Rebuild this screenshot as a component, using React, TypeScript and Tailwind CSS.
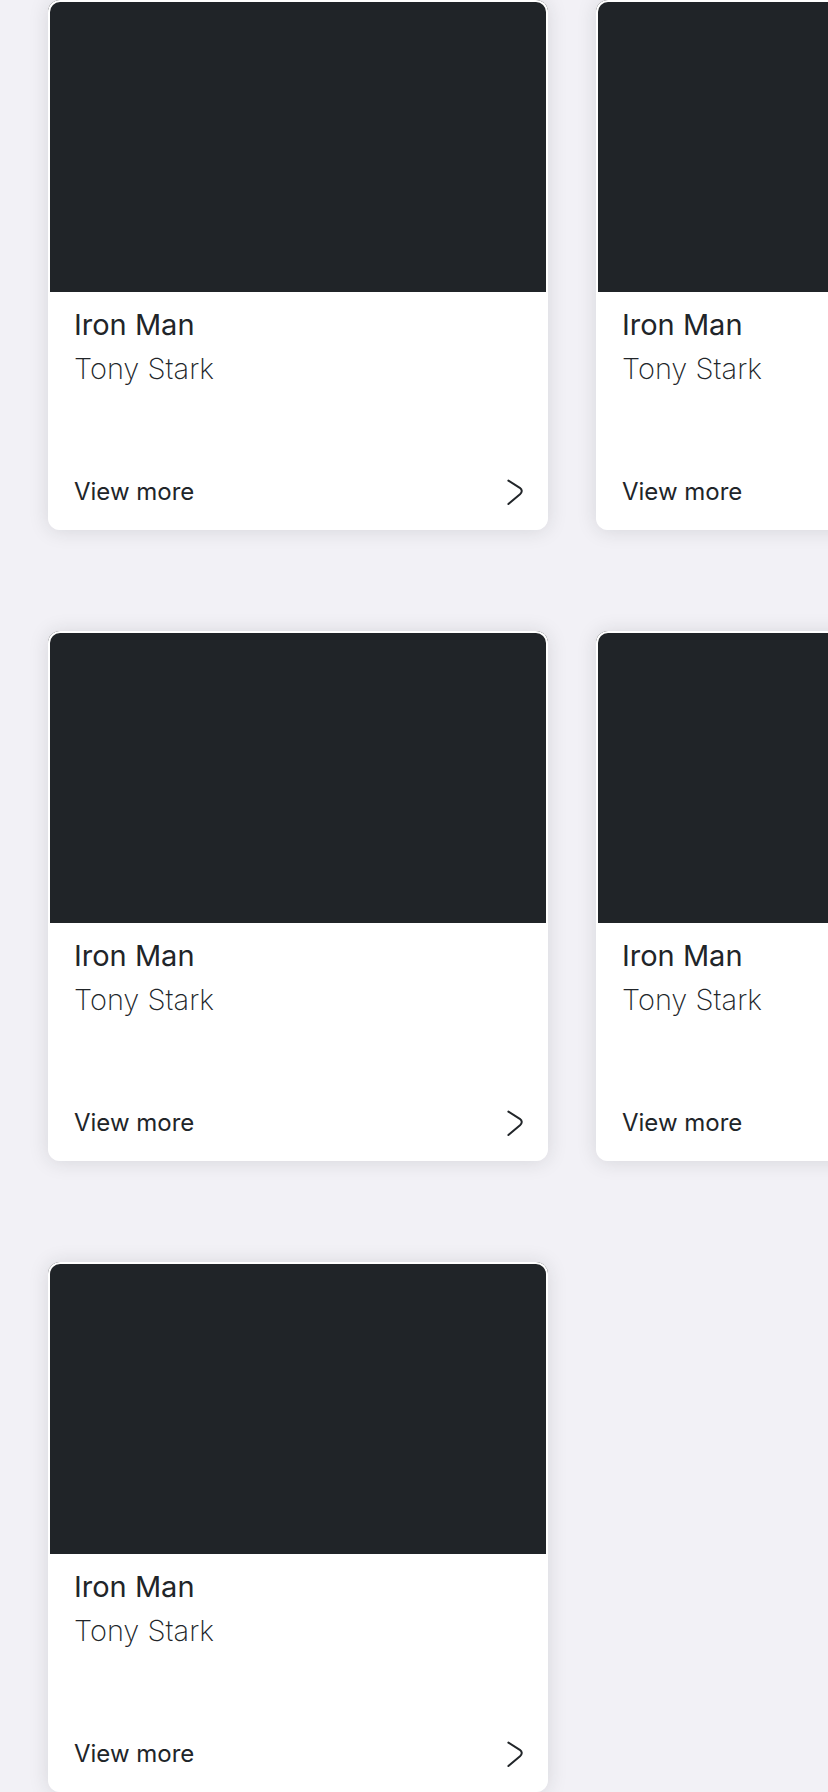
type Hero = { alias: string; name: string };

const ironMan: Hero = { alias: "Iron Man", name: "Tony Stark" };
const rows: Hero[][] = [[ironMan, ironMan], [ironMan, ironMan], [ironMan]];

function Chevron() {
  return (
    <svg
      className="h-7 w-5"
      viewBox="0 0 20 28"
      fill="none"
      stroke="currentColor"
      strokeWidth="2"
      strokeLinecap="round"
      strokeLinejoin="round"
      aria-hidden="true"
    >
      <path d="M4.4 2.6 L15.8 9.8 Q19.6 12.8 16 16.2 L4.4 26" />
    </svg>
  );
}

function HeroCard({ hero }: { hero: Hero }) {
  return (
    <article className="flex w-[500px] shrink-0 flex-col rounded-xl shadow-[0_1px_20px_rgba(33,37,41,0.13)]">
      <div className="h-[292px] rounded-t-xl bg-[#202428]">
        <div className="h-full rounded-t-xl border-2 border-b-0 border-white" />
      </div>
      <div className="rounded-b-xl bg-white pt-[11px]">
        <h2 className="px-[26px] text-[29px] leading-[44px] font-normal">{hero.alias}</h2>
        <p className="px-[26px] text-[29px] leading-[44px] font-extralight">{hero.name}</p>
        <a href="#" className="flex items-center justify-between px-6 pt-[83px] pb-5 text-2xl leading-9">
          <span className="pl-0.5">View more</span>
          <Chevron />
        </a>
      </div>
    </article>
  );
}

export default function App() {
  return (
    <main className="flex min-h-screen flex-col gap-[101px] overflow-hidden bg-[#f2f1f6] font-['Inter','Liberation_Sans',sans-serif] text-[#212529]">
      {rows.map((heroes, row) => (
        <section key={row} className="flex gap-12 pl-12">
          {heroes.map((hero, column) => (
            <HeroCard key={column} hero={hero} />
          ))}
        </section>
      ))}
    </main>
  );
}
